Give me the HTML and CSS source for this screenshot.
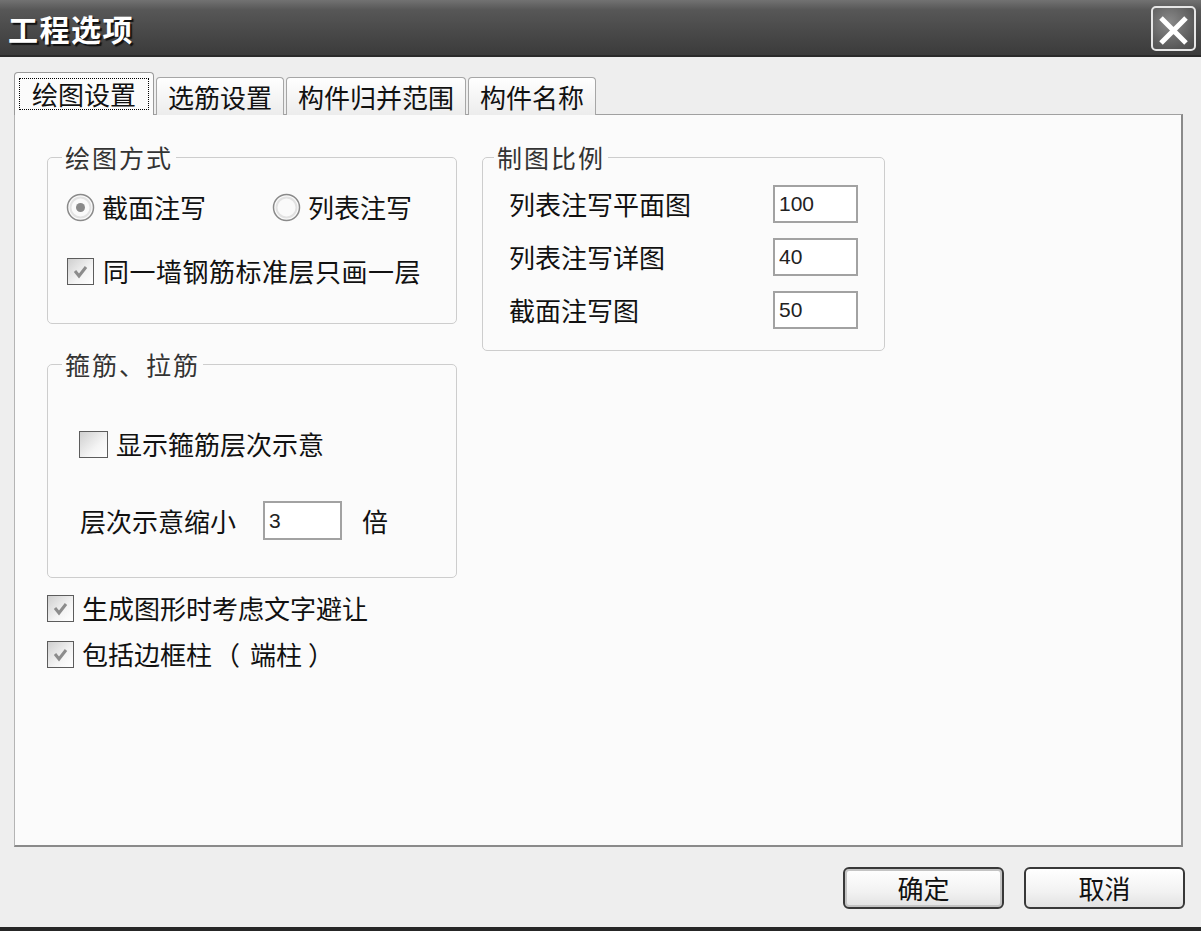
FILE: index.html
```html
<!DOCTYPE html>
<html lang="zh-CN">
  <head>
    <meta charset="UTF-8" />
    <title>工程选项</title>
    <link rel="stylesheet" href="styles.css">
  </head>
  <body>
    <div class="window">
      <div class="titlebar">
        <span class="title">工程选项</span>
        <button class="close-btn" type="button">
          <svg width="41" height="41" viewBox="0 0 41 41">
            <path d="M8 10 L33 35 M33 10 L8 35" stroke="#fff" stroke-width="5" fill="none" />
          </svg>
        </button>
      </div>

      <div class="main">
        <div class="tabs">
          <div class="tab active"><span class="focus">绘图设置</span></div>
          <div class="tab">选筋设置</div>
          <div class="tab">构件归并范围</div>
          <div class="tab">构件名称</div>
        </div>

        <div class="panel">
          <div class="col-left">
            <fieldset class="group group-draw">
              <legend>绘图方式</legend>
              <div class="row radio-row">
                <label class="opt">
                  <svg class="radio" width="29" height="29" viewBox="0 0 29 29">
                    <circle cx="14.5" cy="14.5" r="13" fill="#fafafa" stroke="#8a8a8a" stroke-width="1.5" />
                    <circle cx="14.5" cy="14.5" r="10" fill="none" stroke="#e2e2e2" stroke-width="2" />
                    <circle cx="14.5" cy="14.5" r="4.5" fill="#8a8a8a" />
                  </svg>
                  截面注写
                </label>
                <label class="opt opt-second">
                  <svg class="radio" width="29" height="29" viewBox="0 0 29 29">
                    <circle cx="14.5" cy="14.5" r="13" fill="#fafafa" stroke="#8a8a8a" stroke-width="1.5" />
                    <circle cx="14.5" cy="14.5" r="10" fill="none" stroke="#e2e2e2" stroke-width="2" />
                  </svg>
                  列表注写
                </label>
              </div>
              <div class="row check-row">
                <span class="checkbox checked">
                  <svg width="25" height="25" viewBox="0 0 25 25">
                    <path d="M7 12 L11 17 L18 8" stroke="#8c8c8c" stroke-width="3" fill="none" />
                  </svg>
                </span>
                <span class="narrow">同一墙钢筋标准层只画一层</span>
              </div>
            </fieldset>

            <fieldset class="group group-stirrup">
              <legend>箍筋、拉筋</legend>
              <div class="row check-row show-row">
                <span class="checkbox"></span>
                <span>显示箍筋层次示意</span>
              </div>
              <div class="row scale-row">
                <span>层次示意缩小</span>
                <input class="field small" type="text" value="3" />
                <span>倍</span>
              </div>
            </fieldset>

            <div class="row check-row loose first-loose">
              <span class="checkbox checked">
                <svg width="25" height="25" viewBox="0 0 25 25">
                  <path d="M7 12 L11 17 L18 8" stroke="#8c8c8c" stroke-width="3" fill="none" />
                </svg>
              </span>
              <span>生成图形时考虑文字避让</span>
            </div>
            <div class="row check-row loose">
              <span class="checkbox checked">
                <svg width="25" height="25" viewBox="0 0 25 25">
                  <path d="M7 12 L11 17 L18 8" stroke="#8c8c8c" stroke-width="3" fill="none" />
                </svg>
              </span>
              <span>包括边框柱<span class="paren-open">（</span>端柱<span class="paren-close">）</span></span>
            </div>
          </div>

          <div class="col-right">
            <fieldset class="group group-scale">
              <legend>制图比例</legend>
              <div class="row scale-item">
                <span class="scale-label">列表注写平面图</span>
                <input class="field" type="text" value="100" />
              </div>
              <div class="row scale-item">
                <span class="scale-label">列表注写详图</span>
                <input class="field" type="text" value="40" />
              </div>
              <div class="row scale-item">
                <span class="scale-label">截面注写图</span>
                <input class="field" type="text" value="50" />
              </div>
            </fieldset>
          </div>
        </div>

        <div class="footer">
          <button class="btn default" type="button">确定</button>
          <button class="btn" type="button">取消</button>
        </div>
      </div>
    </div>
  </body>
</html>
```

FILE: styles.css
```css
body {
  margin: 0;
  font-family: "Noto Sans CJK SC", "Liberation Sans", sans-serif;
  background: #eeeeee;
  color: #111;
}
.window {
  width: 1201px;
  height: 931px;
  box-sizing: border-box;
  border-bottom: 4px solid #262626;
  overflow: hidden;
}
.titlebar {
  height: 55px;
  border-bottom: 2px solid #2a2a2a;
  background: linear-gradient(#727272 0, #575757 18%, #4a4a4a 55%, #3b3b3b 100%);
  display: flex;
  align-items: center;
  justify-content: space-between;
  padding: 0 5px 0 8px;
}
.title {
  color: #fff;
  font-size: 30px;
  font-weight: bold;
  letter-spacing: 1.5px;
  line-height: 34px;
  text-shadow: 2px 2px 1px #111;
}
.close-btn {
  width: 45px;
  height: 45px;
  margin-top: 2px;
  padding: 0;
  border: 2px solid #e6e6e6;
  border-radius: 5px;
  background: radial-gradient(circle at 40% 35%, #8a8a8a, #5a5a5a 70%, #4a4a4a);
  display: flex;
  align-items: center;
  justify-content: center;
}
.main {
  padding: 16px 18px 0 14px;
}
.tabs {
  display: flex;
  align-items: flex-end;
  gap: 2px;
  height: 42px;
  margin-bottom: -1px;
  position: relative;
  z-index: 1;
}
.tab {
  font-size: 26px;
  line-height: 30px;
  height: 38px;
  box-sizing: border-box;
  padding: 4px 11px 0;
  border: 1px solid #a6a6a6;
  border-bottom: none;
  border-radius: 4px 4px 0 0;
  background: linear-gradient(#ffffff, #ececec);
}
.tab.active {
  height: 43px;
  padding: 5px 4px 0;
  background: #fbfbfb;
  border-color: #9a9a9a;
}
.tab .focus {
  display: block;
  border: 1px dotted #000;
  padding: 0 12px;
  line-height: 30px;
}
.panel {
  height: 733px;
  box-sizing: border-box;
  width: 1169px;
  border-top: 1px solid #a0a0a0;
  border-left: 1px solid #b4b4b4;
  border-right: 2px solid #8a8a8a;
  border-bottom: 2px solid #8a8a8a;
  background: #fbfbfb;
  padding: 29px 0 0 32px;
  display: flex;
  align-items: flex-start;
  gap: 25px;
}
.col-left {
  width: 410px;
}
.col-right {
  width: 403px;
}
.group {
  margin: 0;
  min-width: 0;
  border: 1px solid #cdcdcd;
  border-radius: 5px;
  padding: 0 14px;
}
.group legend {
  font-size: 25px;
  line-height: 26px;
  letter-spacing: 2px;
  color: #333;
  padding: 0 3px;
}
.row {
  display: flex;
  align-items: center;
  font-size: 26px;
  line-height: 30px;
}
.group-draw {
  padding: 19px 14px 34px;
  margin-bottom: 27px;
}
.radio-row {
  height: 36px;
  padding-left: 4px;
}
.opt {
  display: flex;
  align-items: center;
  gap: 7px;
}
.opt-second {
  margin-left: 66px;
}
.check-row {
  height: 36px;
  gap: 9px;
}
.group-draw .check-row {
  margin-top: 28px;
  padding-left: 5px;
}
.narrow {
  letter-spacing: 0.5px;
  white-space: nowrap;
}
.checkbox {
  width: 25px;
  height: 25px;
  border: 1px solid #5c5c5c;
  background: linear-gradient(135deg, #cfcfcf, #f4f4f4 60%, #ffffff);
  display: inline-block;
  flex: none;
}
.checkbox svg {
  display: block;
}
.group-stirrup {
  padding: 49px 14px 37px;
}
.show-row {
  padding-left: 17px;
  gap: 8px;
}
.show-row .checkbox {
  width: 27px;
}
.scale-row {
  margin-top: 39px;
  padding-left: 18px;
  height: 39px;
}
.field {
  width: 85px;
  height: 38px;
  box-sizing: border-box;
  border: 2px solid #a2a2a2;
  background: #fff;
  font-family: "Liberation Sans", sans-serif;
  font-size: 21px;
  color: #222;
  padding: 0 4px;
  outline: none;
}
.field.small {
  width: 79px;
  height: 39px;
  margin: 0 20px 0 27px;
}
.loose {
  gap: 8px;
}
.first-loose {
  margin-top: 12px;
}
.loose + .loose {
  margin-top: 10px;
}
.paren-open {
  margin: 0 10px 0 2px;
}
.paren-close {
  margin-left: 6px;
}
.group-scale {
  padding: 15px 11px 21px;
}
.scale-item {
  padding-left: 15px;
  height: 38px;
}
.scale-item + .scale-item {
  margin-top: 15px;
}
.scale-label {
  width: 264px;
}
.footer {
  display: flex;
  justify-content: flex-end;
  gap: 20px;
  margin-top: 20px;
  margin-right: -2px;
}
.btn {
  width: 161px;
  height: 42px;
  border: 2px solid #383838;
  border-radius: 6px;
  background: linear-gradient(#ffffff, #f2f2f2 60%, #e2e2e2);
  font-family: "Noto Sans CJK SC", sans-serif;
  font-size: 26px;
  line-height: 30px;
  color: #111;
  padding: 0;
}
.btn.default {
  box-shadow: inset 0 0 0 2px #c4c4c4;
}
```
